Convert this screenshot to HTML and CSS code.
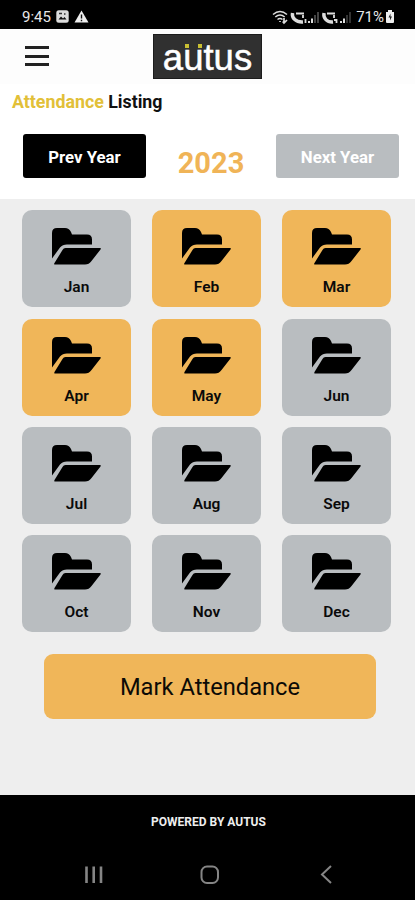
FILE: index.html
```html
<!DOCTYPE html>
<html lang="en">

<head>
    <meta charset="UTF-8">
    <meta name="viewport" content="width=device-width, initial-scale=1.0" />
    <title>Attendance Listing</title>
    <link rel="stylesheet" href="styles.css">
</head>

<body>
    <!-- shared folder icon -->
    <svg class="defs">
        <symbol id="folder" viewBox="0 0 50 37">
            <path d="M0 30.5V5Q0 0 5 0H13Q17 0 19 4L20 6.5H35Q40 6.5 40 11.5V16.5H15Q10.500 16.500 8 19.500Z" />
            <path d="M13.500 20H48Q49.500 20 48.500 21.500L39.500 33Q37 36.500 33 36.500H3Q1.500 36.500 2.500 35L10.500 22Q11.500 20 13.500 20Z" />
        </symbol>
    </svg>

    <div class="status-bar">
        <div class="status-left">
            <span>9:45</span>
            <svg width="13" height="13" viewBox="0 0 13 13">
                <rect x=".3" y=".3" width="12.400" height="12.400" rx="2.500" fill="#ddd" />
                <path d="M2.500 9.500L5 6.500L7 8.500L8.500 7L10.500 9.500Z" fill="#111" />
                <path d="M3 3.500H6M8 4H9.500" stroke="#333" stroke-width="1.300" />
            </svg>
            <svg width="15" height="13" viewBox="0 0 15 13">
                <path d="M7.500 .5L14.500 12.500H.5Z" fill="#eee" />
                <path d="M7.500 4.500V8.500M7.500 9.700V11.200" stroke="#111" stroke-width="1.400" />
            </svg>
        </div>
        <div class="status-right">
            <svg width="82" height="16" viewBox="0 0 82 16" fill="none" stroke="#ddd">
                <!-- wifi -->
                <path d="M1 5.500Q8 -.5 15 5.500M3.300 8Q8 4 12.700 8M5.500 10.500Q8 8.500 10.500 10.500" stroke-width="1.500" />
                <path d="M8 12V13M12 9V14M10.700 12.500L12 14L15 11" stroke-width="1.700" />
                <!-- sim 1 -->
                <path d="M20.500 4C19.500 9 24 13.500 31 13" stroke-width="3.400" />
                <path d="M24 4.500H32M31 6V9M33.500 10V14" stroke-width="1.800" />
                <path d="M37 14V12M40 14V9.500" stroke-width="2" />
                <path d="M43 14V6M46 14V3" stroke="#444" stroke-width="2" />
                <!-- sim 2 -->
                <path d="M52 4C51 9 55 13.500 61 13" stroke-width="3.400" />
                <path d="M55 4.500H63M62 6V9M62 11H64.500V14" stroke-width="1.800" />
                <path d="M69 14V12M72 14V9.500" stroke-width="2" />
                <path d="M75 14V6M78 14V3" stroke="#333" stroke-width="2" />
            </svg>
            <span>71%</span>
            <svg width="10" height="13" viewBox="0 0 10 13">
                <path d="M3 0H7V2H9V12Q9 13 8 13H2Q1 13 1 12V2H3Z" fill="#eee" />
                <path d="M5.500 3.500L3.500 7.500H5V10.500L7 6.500H5.500Z" fill="#222" />
            </svg>
        </div>
    </div>

    <header class="header">
        <div class="menu">
            <span></span>
            <span></span>
            <span></span>
        </div>
        <div class="logo">
            autus
            <i class="dot dot-left"></i>
            <i class="dot dot-right"></i>
        </div>
    </header>

    <h1 class="title"><span>Attendance</span> Listing</h1>

    <div class="year-row">
        <button class="year-btn prev">Prev Year</button>
        <div class="year">2023</div>
        <button class="year-btn next">Next Year</button>
    </div>

    <main class="content">
        <div class="months">
            <div class="month"><svg><use href="#folder" /></svg><span>Jan</span></div>
            <div class="month active"><svg><use href="#folder" /></svg><span>Feb</span></div>
            <div class="month active"><svg><use href="#folder" /></svg><span>Mar</span></div>
            <div class="month active"><svg><use href="#folder" /></svg><span>Apr</span></div>
            <div class="month active"><svg><use href="#folder" /></svg><span>May</span></div>
            <div class="month"><svg><use href="#folder" /></svg><span>Jun</span></div>
            <div class="month"><svg><use href="#folder" /></svg><span>Jul</span></div>
            <div class="month"><svg><use href="#folder" /></svg><span>Aug</span></div>
            <div class="month"><svg><use href="#folder" /></svg><span>Sep</span></div>
            <div class="month"><svg><use href="#folder" /></svg><span>Oct</span></div>
            <div class="month"><svg><use href="#folder" /></svg><span>Nov</span></div>
            <div class="month"><svg><use href="#folder" /></svg><span>Dec</span></div>
        </div>
        <button class="mark-btn">Mark Attendance</button>
    </main>

    <footer class="footer">POWERED BY AUTUS</footer>

    <div class="nav-bar">
        <svg width="20" height="20" viewBox="0 0 20 20">
            <path d="M2.500 1.500V18M9.700 1.500V18M17 1.500V18" stroke-width="2.600" />
        </svg>
        <svg width="20" height="20" viewBox="0 0 20 20">
            <rect x="1.500" y="1.500" width="16.500" height="16.500" rx="5.500" />
        </svg>
        <svg width="20" height="20" viewBox="0 0 20 20">
            <path d="M15 1L6 9.500L15 18" />
        </svg>
    </div>
</body>

</html>
```
FILE: styles.css
```css
* {
    box-sizing: border-box;
    margin: 0;
    padding: 0;
    font-family: Roboto, Arial, sans-serif;
}

body {
    height: 900px;
    display: flex;
    flex-direction: column;
    background: #fff;
    overflow: hidden;
}

button {
    border: none;
}

.defs {
    display: none;
}

.status-bar {
    height: 29px;
    background: #000;
    color: #e8e8e8;
    display: flex;
    justify-content: space-between;
    align-items: center;
    padding: 4px 20px 0 22px;
    font-size: 15px;
}

.status-left,
.status-right {
    display: flex;
    align-items: center;
}

.status-left svg {
    margin-left: 5px;
}

.status-right span {
    margin: 0 1px 0 2px;
}

.header {
    height: 55px;
    display: flex;
    align-items: flex-start;
    padding: 5px 0 0 25px;
    background: #fdfdfd;
}

.menu {
    width: 24px;
    margin: 12px 104px 0 0;
}

.menu span {
    display: block;
    height: 3px;
    margin-bottom: 5.5px;
    background: #222;
}

.logo {
    position: relative;
    width: 109px;
    height: 45px;
    background: #303030;
    border: 1px solid #1c1c1c;
    color: #fff;
    font-family: "Liberation Sans", Arial, sans-serif;
    font-size: 36.5px;
    line-height: 45px;
    text-align: center;
    -webkit-text-stroke: 0.5px #fff;
}

.dot {
    position: absolute;
    top: 9px;
    width: 4px;
    height: 4px;
    background: #c9c032;
}

.dot-left {
    left: 31px;
}

.dot-right {
    left: 44px;
}

.title {
    height: 50px;
    padding: 7px 0 0 12px;
    font-size: 17.8px;
    line-height: 21px;
    font-weight: 700;
    color: #111;
}

.title span {
    color: #e2c038;
}

.year-row {
    height: 65px;
    display: flex;
    justify-content: space-between;
    padding: 0 16px 0 23px;
}

.year-btn {
    width: 123px;
    height: 44px;
    padding-top: 2px;
    border-radius: 3px;
    color: #fff;
    font-size: 16.8px;
    font-weight: 700;
}

.prev {
    background: #000;
}

.next {
    background: #b9bdc0;
}

.year {
    padding-top: 12px;
    color: #f0b457;
    font-size: 29px;
    line-height: 34px;
    font-weight: 700;
}

.content {
    height: 596px;
    padding: 11.4px 24px 0 22px;
    background: #eee;
}

.months {
    display: grid;
    grid-template-columns: repeat(3, 109px);
    grid-auto-rows: 97px;
    justify-content: space-between;
    row-gap: 11.2px;
}

.month {
    display: flex;
    flex-direction: column;
    align-items: center;
    padding-top: 18px;
    border-radius: 10px;
    background: #b9bdc0;
    color: #0a0a0a;
    font-size: 15.5px;
    line-height: 20px;
    font-weight: 600;
}

.month svg {
    width: 50px;
    height: 37px;
    margin-bottom: 12px;
    fill: #000;
}

.active {
    background: #f0b659;
}

.mark-btn {
    display: block;
    width: 332px;
    height: 65px;
    margin: 22px 0 0 22px;
    padding-top: 2px;
    border-radius: 9px;
    background: #f0b659;
    color: #0c0a06;
    font-size: 23.7px;
}

.footer {
    height: 54px;
    background: #000;
    color: #eee;
    text-align: center;
    font-size: 12px;
    line-height: 54px;
    font-weight: 700;
    padding-left: 2px;
}

.nav-bar {
    height: 51px;
    display: flex;
    justify-content: space-between;
    align-items: center;
    padding: 0 79px 0 84px;
    background: #000;
}

.nav-bar svg {
    fill: none;
    stroke: #858585;
    stroke-width: 2;
}
```
